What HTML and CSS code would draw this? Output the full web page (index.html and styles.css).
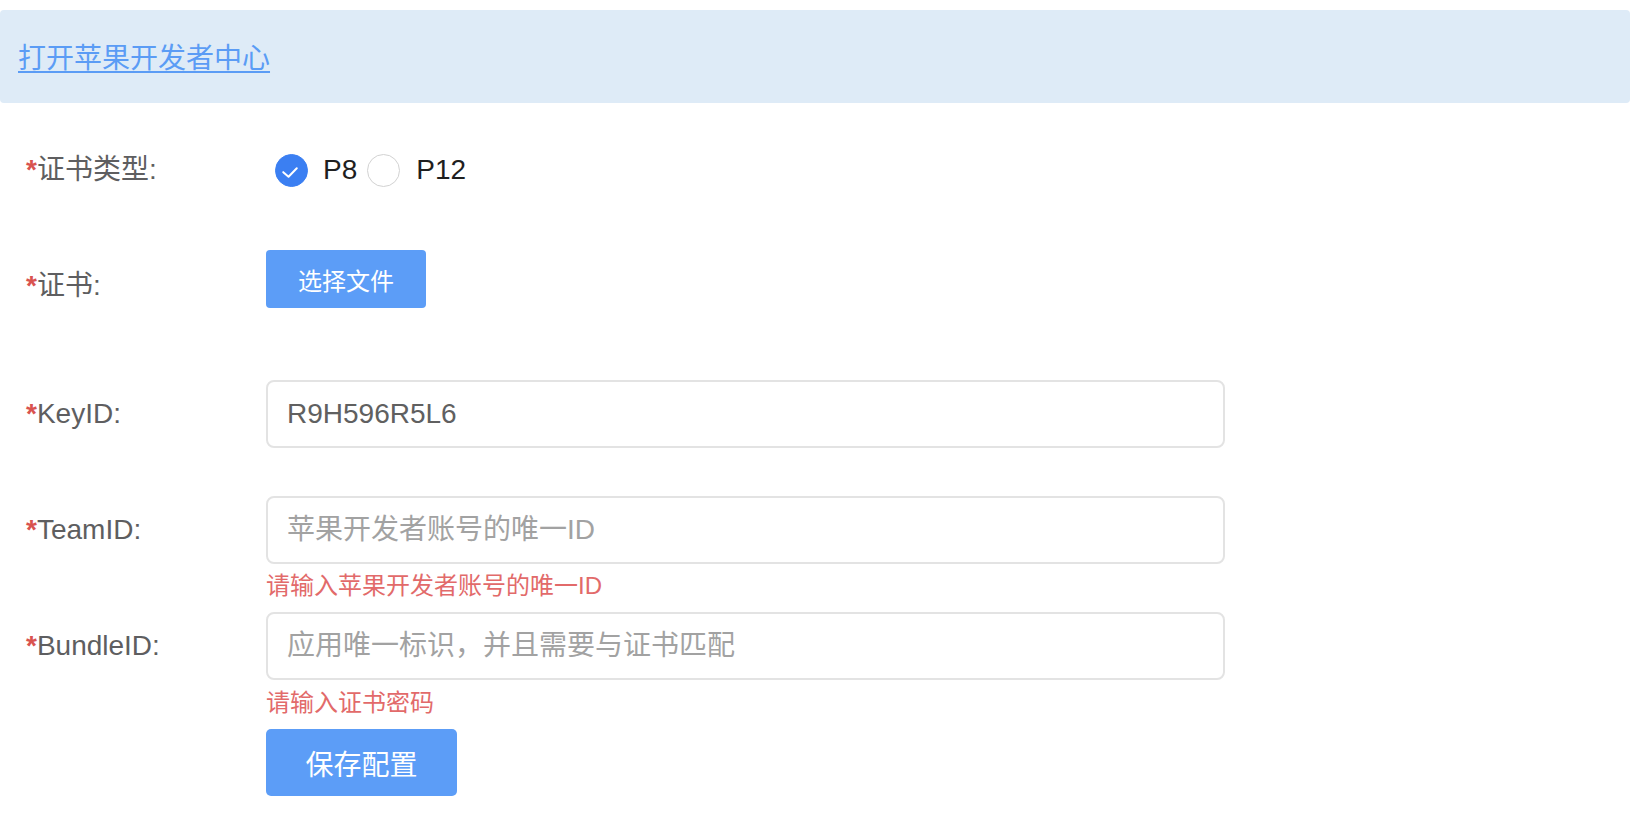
FILE: index.html
```html
<!DOCTYPE html>
<html lang="zh-CN">
<head>
    <meta charset="UTF-8">
    <meta name="viewport" content="width=device-width, initial-scale=1.0">
    <title>证书配置</title>
    <link rel="stylesheet" href="styles.css">
</head>

<body>
    <div class="notice">
        <a href="#" class="notice_link">打开苹果开发者中心</a>
    </div>

    <form class="cert_form">
        <!-- 证书类型 -->
        <div class="form_item first">
            <label class="form_label"><span class="req">*</span>证书类型:</label>
            <div class="radio_group">
                <label class="radio">
                    <span class="radio_dot checked">
                        <svg viewBox="0 0 100 100" width="33" height="33">
                            <path d="M25 55 L41 69 L66 43" fill="none" stroke="#fff" stroke-width="6" stroke-linecap="round" stroke-linejoin="round"/>
                        </svg>
                    </span>
                    <span class="radio_text">P8</span>
                </label>
                <label class="radio">
                    <span class="radio_dot"></span>
                    <span class="radio_text">P12</span>
                </label>
            </div>
        </div>

        <!-- 证书 -->
        <div class="form_item cert_row">
            <label class="form_label"><span class="req">*</span>证书:</label>
            <button type="button" class="btn btn_file">选择文件</button>
        </div>

        <div class="form_item key_row">
            <label class="form_label"><span class="req">*</span>KeyID:</label>
            <div class="form_control">
                <input type="text" class="text_input" value="R9H596R5L6">
            </div>
        </div>

        <div class="form_item team_row">
            <label class="form_label"><span class="req">*</span>TeamID:</label>
            <div class="form_control">
                <input type="text" class="text_input" placeholder="苹果开发者账号的唯一ID">
                <div class="form_error">请输入苹果开发者账号的唯一ID</div>
            </div>
        </div>

        <div class="form_item bundle_row">
            <label class="form_label"><span class="req">*</span>BundleID:</label>
            <div class="form_control">
                <input type="text" class="text_input" placeholder="应用唯一标识，并且需要与证书匹配">
                <div class="form_error">请输入证书密码</div>
            </div>
        </div>

        <div class="form_item save_row">
            <div class="form_label"></div>
            <button type="button" class="btn btn_save">保存配置</button>
        </div>
    </form>
</body>
</html>
```

FILE: styles.css
```css
body {
    margin: 0;
    background: #fff;
    font-family: "Liberation Sans", "Noto Sans CJK SC", sans-serif;
    color: #5e5e60;
}

.notice {
    margin-top: 10px;
    height: 93px;
    background-color: #deebf7;
    border-radius: 4px;
    padding-left: 18px;
    display: flex;
    align-items: center;
}

.notice_link {
    font-size: 28px;
    line-height: 34px;
    color: #5b9cf5;
    text-decoration: underline;
    text-underline-offset: 3px;
    margin-top: 4px;
}

.cert_form {
    padding-left: 26px;
}

.form_item {
    display: flex;
    align-items: flex-start;
}

.form_label {
    width: 240px;
    flex-shrink: 0;
    height: 68px;
    line-height: 68px;
    font-size: 28px;
    color: #5e5e60;
    white-space: nowrap;
}

.req {
    color: #d9534f;
    font-weight: bold;
}

.first {
    margin-top: 33px;
}

.cert_row {
    margin-top: 48px;
}

.key_row {
    margin-top: 60px;
}

.team_row {
    margin-top: 48px;
}

.bundle_row {
    margin-top: 14px;
}

.save_row {
    margin-top: 14px;
}

.form_control {
    width: 959px;
}

.text_input {
    box-sizing: border-box;
    width: 100%;
    height: 68px;
    border: 2px solid #e3e3e3;
    border-radius: 8px;
    padding: 0 19px;
    font-family: "Liberation Sans", "Noto Sans CJK SC", sans-serif;
    font-size: 28px;
    color: #606060;
    outline: none;
}

.text_input::placeholder {
    color: #a2a2a2;
}

.form_error {
    margin-top: 10px;
    font-size: 24px;
    line-height: 24px;
    color: #e26a6a;
}

.bundle_row .form_error {
    margin-top: 11px;
}

/* radios */
.radio_group {
    display: flex;
    align-items: center;
    height: 68px;
    margin-left: 9px;
}

.radio {
    display: flex;
    align-items: center;
    cursor: pointer;
}

.radio_dot {
    box-sizing: border-box;
    width: 33px;
    height: 33px;
    border-radius: 50%;
    border: 1px solid #d2d2d2;
    background: #fff;
    margin-right: 16px;
    display: flex;
}

.radio_dot.checked {
    background: #3b7ff2;
    border-color: #3b7ff2;
    margin-right: 15px;
}

.radio_dot svg {
    margin: -1px;
}

.radio_text {
    font-size: 28px;
    color: #1f1f1f;
    margin-right: 10px;
}

/* buttons */
.btn {
    border: none;
    background-color: #5c9df7;
    color: #fff;
    cursor: pointer;
    font-family: "Liberation Sans", "Noto Sans CJK SC", sans-serif;
    padding: 0;
}

.btn_file {
    width: 160px;
    height: 58px;
    margin-top: -2px;
    border-radius: 4px;
    font-size: 24px;
}

.btn_save {
    width: 191px;
    height: 67px;
    border-radius: 5px;
    font-size: 28px;
}
```
